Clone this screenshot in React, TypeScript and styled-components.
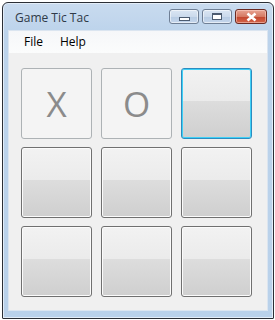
import React from 'react';
import styled, { createGlobalStyle } from 'styled-components';

const Global = createGlobalStyle`
  body {
    margin: 0;
    background: #ffffff;
    font-family: "Open Sans", "Noto Sans", sans-serif;
  }
`;

type Cell = { mark: string; state: 'disabled' | 'focused' | 'normal' };

const cells: Cell[] = [
  { mark: 'X', state: 'disabled' },
  { mark: 'O', state: 'disabled' },
  { mark: '', state: 'focused' },
  { mark: '', state: 'normal' },
  { mark: '', state: 'normal' },
  { mark: '', state: 'normal' },
  { mark: '', state: 'normal' },
  { mark: '', state: 'normal' },
  { mark: '', state: 'normal' },
];

const App = () => {
  return (
    <>
      <Global />
      <Window>
        <TitleBar>
          <Title>Game Tic Tac</Title>
          <Caption>
            <CapButton $w={28}>
              <MinGlyph />
            </CapButton>
            <CapButton $w={28}>
              <MaxGlyph />
            </CapButton>
            <CloseButton $w={30}>
              <svg width="13" height="10" viewBox="0 0 13 10">
                <path d="M2.5 1.5 L10.5 8.5 M10.5 1.5 L2.5 8.5" stroke="#ffffff" strokeWidth="2.6" />
              </svg>
            </CloseButton>
          </Caption>
        </TitleBar>
        <Client>
          <MenuBar>
            <MenuItem>File</MenuItem>
            <MenuItem>Help</MenuItem>
          </MenuBar>
          <Board>
            {cells.map((c, i) => (
              <CellButton key={i} $state={c.state}>
                {c.mark}
              </CellButton>
            ))}
          </Board>
        </Client>
      </Window>
    </>
  );
};

const Window = styled.div`
  margin: 2px 0 0 2px;
  width: 260px;
  height: 308px;
  border: 1px solid #2b2f36;
  border-radius: 6px 6px 1px 1px;
  background: linear-gradient(180deg, #c9dbef 0px, #bcd3eb 30px, #b9d1ea 100%);
  box-shadow: inset 0 0 0 1px #e3edf8;
  display: flex;
  flex-direction: column;
  padding: 0 5px 7px 5px;
  box-sizing: content-box;
`;

const TitleBar = styled.div`
  height: 27px;
  display: flex;
  align-items: flex-start;
  justify-content: space-between;
`;

const Title = styled.div`
  font-size: 12px;
  color: #2f3a48;
  margin: 8px 0 0 7px;
  line-height: 14px;
`;

const Caption = styled.div`
  display: flex;
  gap: 3px;
  margin: 6px 1px 0 0;
`;

const CapButton = styled.div<{ $w: number }>`
  width: ${(p) => p.$w}px;
  height: 13px;
  border: 1px solid #6f7f95;
  border-radius: 3px;
  background: linear-gradient(180deg, #dbe6f3 0%, #cbdaec 50%, #b7cbe3 51%, #c4d6ec 100%);
  box-shadow: inset 0 0 0 1px rgba(255, 255, 255, 0.55);
  display: flex;
  align-items: center;
  justify-content: center;
`;

const CloseButton = styled(CapButton)`
  border-color: #6b2a22;
  background: linear-gradient(180deg, #e8a493 0%, #d57a64 50%, #c2452d 51%, #d3654a 100%);
  box-shadow: inset 0 0 0 1px rgba(255, 220, 210, 0.5);
`;

const MinGlyph = styled.div`
  width: 9px;
  height: 2px;
  margin-top: 5px;
  border: 1px solid #4c5b70;
  background: #ffffff;
`;

const MaxGlyph = styled.div`
  width: 8px;
  height: 4px;
  border: 1px solid #4c5b70;
  border-top-width: 2px;
  background: #ffffff;
`;

const Client = styled.div`
  flex: 1;
  border: 1px solid #dbe5f0;
  background: #f0f0f0;
  display: flex;
  flex-direction: column;
`;

const MenuBar = styled.div`
  height: 22px;
  display: flex;
  align-items: center;
  padding-left: 7px;
  background: linear-gradient(180deg, #f6f7f9 0%, #fbfcfc 100%);
`;

const MenuItem = styled.div`
  font-size: 12px;
  color: #000000;
  padding: 0 8px;
  line-height: 16px;
  margin-right: 1px;
`;

const Board = styled.div`
  display: grid;
  grid-template-columns: repeat(3, 71px);
  grid-template-rows: repeat(3, 71px);
  column-gap: 9px;
  row-gap: 8px;
  padding: 15px 0 0 12px;
`;

const CellButton = styled.div<{ $state: 'disabled' | 'focused' | 'normal' }>`
  box-sizing: border-box;
  border-radius: 3px;
  display: flex;
  align-items: center;
  justify-content: center;
  font-family: "Open Sans", "Noto Sans", sans-serif;
  font-size: 35px;
  color: #8b8b8b;
  border: 1px solid ${(p) => (p.$state === 'disabled' ? '#adb2b5' : p.$state === 'focused' ? '#2b8cc0' : '#707070')};
  background: ${(p) =>
    p.$state === 'disabled'
      ? '#f4f4f4'
      : 'linear-gradient(180deg, #f2f2f2 0%, #ebebeb 46%, #dddddd 46%, #cfcfcf 100%)'};
  box-shadow: ${(p) =>
    p.$state === 'focused'
      ? 'inset 0 0 0 1px #3fd0f6'
      : p.$state === 'normal'
        ? 'inset 0 0 0 1px #fbfbfb'
        : 'none'};
`;

export default App;
